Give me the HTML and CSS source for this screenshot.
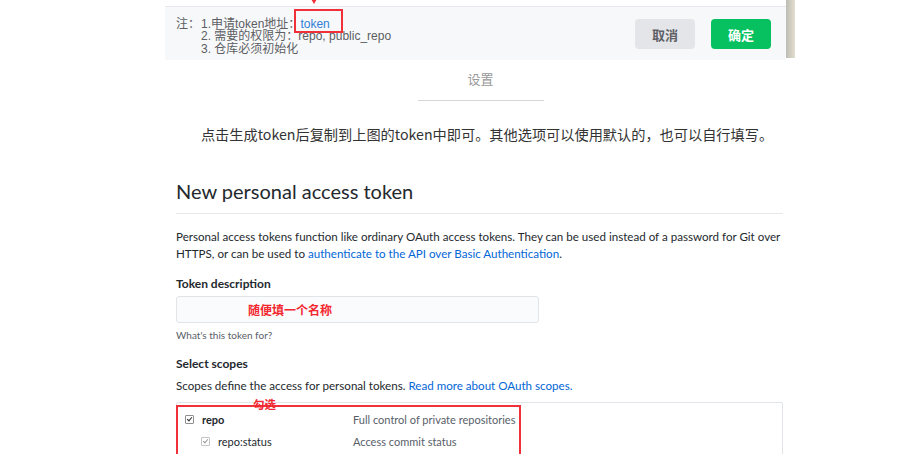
FILE: index.html
```html
<!DOCTYPE html>
<html lang="zh-CN">
<head>
<meta charset="utf-8">
<title>token</title>
<link rel="stylesheet" href="styles.css">
</head>
<body>
<div class="topbar">
  <div class="dialog">
    <div class="notes">
      <span class="note-label">注：</span>
      <div class="note-lines">
        <div>1.申请token地址：<span class="mark"><a class="note-link">token</a></span></div>
        <div>2. 需要的权限为：repo, public_repo</div>
        <div>3. 仓库必须初始化</div>
      </div>
    </div>
    <div class="actions">
      <button class="btn btn-cancel">取消</button>
      <button class="btn btn-ok">确定</button>
    </div>
  </div>
  <div class="strip"></div>
</div>

<div class="content">
  <div class="settings-tab">设置</div>
  <p class="hint">点击生成token后复制到上图的token中即可。其他选项可以使用默认的，也可以自行填写。</p>

  <h2 class="subhead">New personal access token</h2>
  <p class="desc">Personal access tokens function like ordinary OAuth access tokens. They can be used instead of a password for Git over<br>HTTPS, or can be used to <a class="gh-link">authenticate to the API over Basic Authentication</a>.</p>

  <div class="label">Token description</div>
  <div class="input"><span class="input-note">随便填一个名称</span></div>
  <div class="help">What's this token for?</div>

  <div class="label label-scopes">Select scopes</div>
  <p class="scopes-desc">Scopes define the access for personal tokens. <a class="gh-link">Read more about OAuth scopes.</a></p>

  <div class="scopes">
    <div class="scope-row">
      <span class="scope-name"><span class="cb"></span><b>repo</b></span>
      <span class="scope-text">Full control of private repositories</span>
    </div>
    <div class="scope-row sub">
      <span class="scope-name"><span class="cb cb-dis"></span>repo:status</span>
      <span class="scope-text">Access commit status</span>
    </div>
    <div class="annot"><span class="annot-label">勾选</span></div>
  </div>
</div>
</body>
</html>
```

FILE: styles.css
```css
html, body {
  margin: 0;
  padding: 0;
  background: #ffffff;
  overflow: hidden;
}
body {
  width: 906px;
  height: 454px;
  font-family: "Lato", "Noto Sans CJK SC", sans-serif;
}
a {
  text-decoration: none;
}

/* ---------- top dialog strip ---------- */
.topbar {
  display: flex;
  margin-left: 165px;
  height: 60px;
}
.dialog {
  width: 621px;
  box-sizing: border-box;
  margin-top: 6px;
  border-top: 1px solid #e6e8ec;
  background: #f7f8fa;
  display: flex;
  align-items: flex-start;
  justify-content: space-between;
  padding: 0 15px 0 11px;
}
.notes {
  display: flex;
  padding-top: 10.5px;
  font-family: "Liberation Sans", "Noto Sans CJK SC", sans-serif;
  font-size: 12px;
  line-height: 12.5px;
  color: #5c5e63;
}
.note-label {
  width: 25px;
}
.note-lines div {
  white-space: nowrap;
}
.mark {
  position: relative;
}
.mark::before {
  content: "";
  position: absolute;
  left: -6px;
  top: -8px;
  width: 45px;
  height: 20px;
  border: 2px solid #f0313a;
}
.mark::after {
  content: "";
  position: absolute;
  left: 11px;
  top: -17.5px;
  border-left: 3px solid transparent;
  border-right: 3px solid transparent;
  border-top: 5px solid #f0313a;
}
.note-link {
  color: #2f7fd6;
}
.actions {
  display: flex;
  gap: 16px;
  padding-top: 12px;
}
.btn {
  width: 60px;
  height: 30px;
  border: none;
  border-radius: 4px;
  font-family: "Noto Sans CJK SC", sans-serif;
  font-size: 13px;
  font-weight: 700;
  padding: 0;
}
.btn-cancel {
  background: #e3e5e8;
  color: #5e6066;
}
.btn-ok {
  background: #07c160;
  color: #ffffff;
}
.strip {
  width: 9px;
  height: 58px;
  background: linear-gradient(to right, #bdbcb4, #e3dfcf);
}

/* ---------- content ---------- */
.content {
  margin-left: 176px;
  width: 607px;
  color: #24292e;
}
.settings-tab {
  width: 126px;
  margin: 10px auto 0;
  padding-bottom: 12px;
  border-bottom: 1px solid #d6d6d6;
  text-align: center;
  font-family: "Noto Sans CJK SC", sans-serif;
  font-size: 13px;
  line-height: 18px;
  color: #999999;
  position: relative;
  left: 1px;
}
.hint {
  margin: 23px 0 0;
  padding-left: 15px;
  text-align: center;
  white-space: nowrap;
  font-family: "Noto Sans CJK SC", sans-serif;
  font-size: 14.2px;
  line-height: 20px;
  color: #333333;
}
.subhead {
  margin: 35px 0 0;
  padding-bottom: 9px;
  border-bottom: 1px solid #e6e8eb;
  font-size: 20px;
  line-height: 25px;
  font-weight: 400;
  color: #24292e;
}
.desc {
  margin: 13.5px 0 0;
  font-size: 11.6px;
  line-height: 17px;
  white-space: nowrap;
}
.gh-link {
  color: #0366d6;
}
.label {
  margin-top: 13px;
  font-size: 12px;
  line-height: 17px;
  font-weight: 700;
}
.input {
  margin-top: 4.5px;
  width: 363px;
  height: 27px;
  box-sizing: border-box;
  border: 1px solid #e1e4e8;
  border-radius: 3px;
  background: #fafbfc;
  padding-left: 71px;
  display: flex;
  align-items: center;
}
.input-note {
  font-family: "Noto Sans CJK SC", sans-serif;
  font-size: 12px;
  font-weight: 700;
  color: #f2272f;
}
.help {
  margin-top: 5px;
  font-size: 10px;
  line-height: 14px;
  color: #586069;
}
.label-scopes {
  margin-top: 12.5px;
}
.scopes-desc {
  margin: 5px 0 0;
  font-size: 11.6px;
  line-height: 17px;
}
.scopes {
  position: relative;
  margin-top: 8.5px;
  height: 52px;
  border: 1px solid #e1e4e8;
  border-bottom: none;
  border-radius: 2px 2px 0 0;
  padding-top: 7px;
  box-sizing: border-box;
}
.scope-row {
  display: flex;
  align-items: center;
  height: 18px;
  font-size: 11px;
  color: #24292e;
}
.scope-row.sub {
  margin-top: 4px;
}
.scope-name {
  box-sizing: border-box;
  width: 176px;
  display: flex;
  align-items: center;
  padding-left: 8px;
}
.scope-row.sub .scope-name {
  padding-left: 24px;
}
.scope-name b {
  font-weight: 700;
}
.scope-text {
  color: #586069;
}
.cb {
  width: 7px;
  height: 7px;
  border: 1px solid #8f8f8f;
  border-radius: 1px;
  background: #ffffff;
  margin-right: 8px;
  position: relative;
}
.cb::after {
  content: "";
  position: absolute;
  left: 2px;
  top: 0px;
  width: 2px;
  height: 4px;
  border-right: 1.5px solid #333;
  border-bottom: 1.5px solid #333;
  transform: rotate(40deg);
}
.cb-dis {
  border-color: #c4c4c4;
}
.cb-dis::after {
  border-color: #9a9a9a;
}
.annot {
  position: absolute;
  left: -1px;
  top: 2px;
  width: 341px;
  height: 49px;
  border: 2px solid #f0313a;
  border-bottom: none;
}
.annot-label {
  position: absolute;
  left: 75px;
  top: -9px;
  font-family: "Noto Sans CJK SC", sans-serif;
  font-size: 11.5px;
  line-height: 13px;
  font-weight: 700;
  color: #f2272f;
}
```
